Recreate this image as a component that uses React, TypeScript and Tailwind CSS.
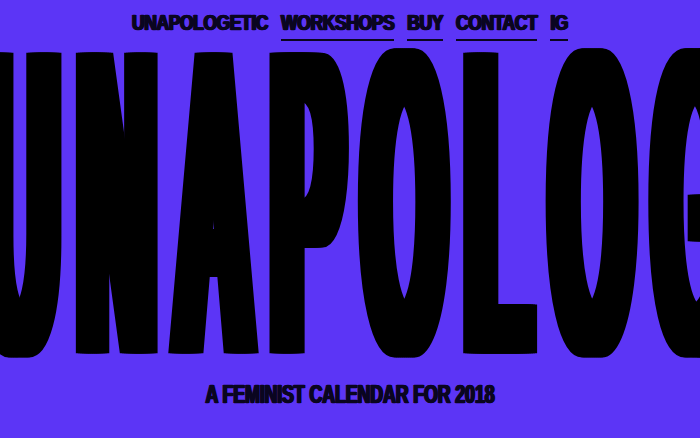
import React from "react";

const font = { fontFamily: '"Liberation Sans", Arial, sans-serif' };

function NavItem({ label, underline }: { label: string; underline?: boolean }) {
  return (
    <a
      href="#"
      className={
        "inline-block pb-[4px] " +
        (underline ? "border-b-2 border-[#0a0520]" : "border-b-2 border-transparent")
      }
    >
      <span className="inline-block origin-center scale-y-[1.3] text-[17.5px] leading-none font-bold tracking-[-0.4px] text-[#0a0520] [-webkit-text-stroke:0.5px_#0a0520] [text-shadow:1px_0_0_#0a0520,-1px_0_0_#0a0520]">
        {label}
      </span>
    </a>
  );
}

export default function App() {
  return (
    <div
      className="relative flex h-[438px] w-full flex-col items-center overflow-hidden bg-[#5c35f6]"
      style={font}
    >
      <nav className="flex items-start gap-[13px] pt-[11px]">
        <NavItem label="UNAPOLOGETIC" />
        <NavItem label="WORKSHOPS" underline />
        <NavItem label="BUY" underline />
        <NavItem label="CONTACT" underline />
        <NavItem label="IG" underline />
      </nav>

      <div className="ml-[-18px] mt-[-58px] self-start whitespace-nowrap">
        <h1 className="inline-block origin-top scale-y-[4.16] text-[105px] leading-none font-bold tracking-[21px] text-black [text-shadow:2px_0_0_#000,4px_0_0_#000,6px_0_0_#000,8px_0_0_#000,10px_0_0_#000,-2px_0_0_#000,-4px_0_0_#000,-6px_0_0_#000,-8px_0_0_#000,-10px_0_0_#000]">
          UNAPOLOGETIC
        </h1>
      </div>

      <p className="mb-[30px] mt-auto">
        <span className="inline-block origin-center scale-y-[1.48] text-[17.8px] leading-none font-bold tracking-[-0.1px] text-[#0a0520] [-webkit-text-stroke:0.5px_#0a0520] [text-shadow:1px_0_0_#0a0520,-1px_0_0_#0a0520]">
          A FEMINIST CALENDAR FOR 2018
        </span>
      </p>
    </div>
  );
}
